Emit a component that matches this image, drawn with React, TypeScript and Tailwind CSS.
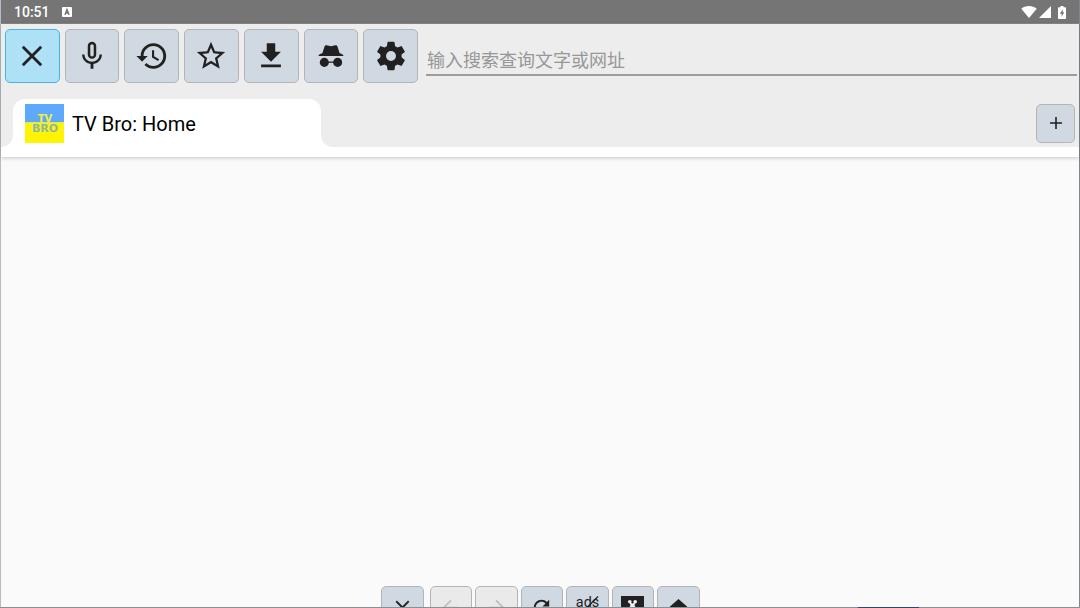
import React, { useState } from 'react';

type IconProps = { className?: string };

const CloseIcon: React.FC<IconProps> = ({ className }) => (
  <svg className={className} fill="none" stroke="currentColor" viewBox="0 0 24 24">
    <path strokeLinecap="square" strokeWidth={2} d="M6.200 6.200l11.600 11.600M17.800 6.200L6.200 17.800" />
  </svg>
);

const MicIcon: React.FC<IconProps> = ({ className }) => (
  <svg className={className} fill="currentColor" viewBox="0 0 24 24">
    <path d="M12 14c1.66 0 2.99-1.34 2.99-3L15 5c0-1.66-1.34-3-3-3S9 3.34 9 5v6c0 1.66 1.34 3 3 3zm-1.2-9.1c0-.66.54-1.2 1.2-1.2.66 0 1.2.54 1.2 1.2l-.01 6.2c0 .66-.53 1.2-1.19 1.2-.66 0-1.2-.54-1.2-1.2V4.9zm6.5 6.1c0 3-2.54 5.1-5.3 5.1S6.7 14 6.7 11H5c0 3.41 2.72 6.23 6 6.72V21h2v-3.28c3.28-.48 6-3.3 6-6.72h-1.7z" />
  </svg>
);

const HistoryIcon: React.FC<IconProps> = ({ className }) => (
  <svg className={className} fill="currentColor" viewBox="0 0 24 24">
    <path d="M13 3c-4.97 0-9 4.03-9 9H1l3.89 3.89.07.14L9 12H6c0-3.87 3.13-7 7-7s7 3.13 7 7-3.13 7-7 7c-1.93 0-3.68-.79-4.94-2.06l-1.42 1.42C8.27 19.99 10.51 21 13 21c4.97 0 9-4.03 9-9s-4.03-9-9-9zm-1 5v5l4.28 2.54.72-1.21-3.5-2.08V8H12z" />
  </svg>
);

const StarIcon: React.FC<IconProps> = ({ className }) => (
  <svg className={className} fill="currentColor" viewBox="0 0 24 24">
    <path d="M22 9.24l-7.19-.62L12 2 9.19 8.63 2 9.24l5.46 4.73L5.82 21 12 17.27 18.18 21l-1.63-7.03L22 9.24zM12 15.4l-3.76 2.27 1-4.28-3.32-2.88 4.38-.38L12 6.1l1.71 4.04 4.38.38-3.32 2.88 1 4.28L12 15.4z" />
  </svg>
);

const DownloadIcon: React.FC<IconProps> = ({ className }) => (
  <svg className={className} fill="currentColor" viewBox="0 0 24 24">
    <path d="M19 9h-4V3H9v6H5l7 7 7-7zM5 18v2h14v-2H5z" />
  </svg>
);

const IncognitoIcon: React.FC<IconProps> = ({ className }) => (
  <svg className={className} fill="currentColor" viewBox="0 0 24 24">
    <path d="M5.900 10L7.500 5.200c.2-.7.800-1 1.500-.8L12 5.200l3-.8c.7-.2 1.300.1 1.500.8L18.100 10c1.100.3 2 .7 2.600 1.400v.6H3.300v-.6c.6-.7 1.500-1.100 2.600-1.400z" />
    <circle cx="7.300" cy="16.500" r="3.200" />
    <circle cx="16.700" cy="16.500" r="3.200" />
    <path d="M9.500 15.900h5v.9h-5z" />
  </svg>
);

const SettingsIcon: React.FC<IconProps> = ({ className }) => (
  <svg className={className} fill="currentColor" viewBox="0 0 24 24">
    <path d="M12 15.5A3.5 3.5 0 0 1 8.500 12 3.500 3.500 0 0 1 12 8.500a3.500 3.500 0 0 1 3.500 3.500 3.500 3.500 0 0 1-3.500 3.500m7.430-2.530c.04-.32.07-.64.07-.97s-.03-.66-.07-1l2.110-1.630c.19-.15.24-.42.12-.64l-2-3.460c-.12-.22-.39-.31-.61-.22l-2.490 1c-.52-.39-1.060-.73-1.690-.98l-.37-2.650A.506.506 0 0 0 14 2h-4c-.25 0-.46.18-.5.42l-.37 2.650c-.63.25-1.170.59-1.690.98l-2.490-1c-.22-.09-.49 0-.61.22l-2 3.460c-.13.22-.07.49.12.64L4.570 11c-.04.34-.07.67-.07 1s.03.65.07.97l-2.110 1.660c-.19.15-.25.42-.12.64l2 3.460c.12.22.39.3.61.22l2.490-1.010c.52.4 1.060.74 1.690.99l.37 2.650c.04.24.25.42.5.42h4c.25 0 .46-.18.5-.42l.37-2.650c.63-.26 1.170-.59 1.690-.99l2.490 1.010c.22.08.49 0 .61-.22l2-3.460c.12-.22.07-.49-.12-.64z" />
  </svg>
);

const BackIcon: React.FC<IconProps> = ({ className }) => (
  <svg className={className} fill="none" stroke="currentColor" viewBox="0 0 24 24">
    <path strokeWidth={1.8} d="M20 12H5M12.500 4.500L5 12l7.500 7.500" />
  </svg>
);

const ForwardIcon: React.FC<IconProps> = ({ className }) => (
  <svg className={className} fill="none" stroke="currentColor" viewBox="0 0 24 24">
    <path strokeWidth={1.8} d="M4 12h15M11.500 4.500L19 12l-7.500 7.500" />
  </svg>
);

const RefreshIcon: React.FC<IconProps> = ({ className }) => (
  <svg className={className} fill="currentColor" viewBox="0 0 24 24">
    <path d="M17.65 6.35C16.200 4.900 14.210 4 12 4c-4.420 0-7.990 3.580-7.990 8s3.570 8 7.990 8c3.730 0 6.840-2.550 7.730-6h-2.080c-.82 2.330-3.040 4-5.650 4-3.310 0-6-2.690-6-6s2.690-6 6-6c1.660 0 3.140.69 4.220 1.780L13 11h7V4l-2.350 2.350z" />
  </svg>
);

const AdsIcon: React.FC<IconProps> = ({ className }) => (
  <svg className={className} viewBox="0 0 24 24">
    <text x="12" y="11.500" textAnchor="middle" fontSize="15" fill="currentColor" className="font-['Roboto',sans-serif]">
      ads
    </text>
    <path stroke="currentColor" strokeWidth={1.3} d="M12 11.500L23 .5" />
  </svg>
);

const PopupBlockIcon: React.FC<IconProps> = ({ className }) => (
  <svg className={className} viewBox="0 0 24 24">
    <path fill="currentColor" d="M0 0h24v24H0z" />
    <g fill="#eef1f4">
      <circle cx="9.200" cy="6" r="1.900" />
      <circle cx="14.800" cy="6" r="1.900" />
      <circle cx="9.200" cy="13" r="1.900" />
      <circle cx="14.800" cy="13" r="1.900" />
      <path d="M9 6.500l3 1.200 3-1.200-.8 3.200.8 3.300H9l.8-3.300z" />
    </g>
  </svg>
);

const HomeIcon: React.FC<IconProps> = ({ className }) => (
  <svg className={className} fill="currentColor" viewBox="0 0 24 24">
    <path d="M10 20v-6h4v6h5v-8h3L12 3 2 12h3v8z" />
  </svg>
);

const SiteLogo: React.FC<IconProps> = ({ className }) => (
  <svg className={className} viewBox="0 0 39 39">
    <path fill="#5fa9fd" d="M0 0h39v18.500H0z" />
    <path fill="#fff500" d="M0 18.500h39V39H0z" />
    <g textAnchor="middle" className="font-['DejaVu_Sans',sans-serif] font-bold">
      <text x="20" y="18" fontSize="10" fill="#f2f03c">TV</text>
      <text x="20" y="28" fontSize="11" fill="#8db8a8">BRO</text>
    </g>
  </svg>
);

const toolbarItems = [
  { label: 'Close menu', Icon: CloseIcon },
  { label: 'Voice search', Icon: MicIcon },
  { label: 'History', Icon: HistoryIcon },
  { label: 'Favorites', Icon: StarIcon },
  { label: 'Downloads', Icon: DownloadIcon },
  { label: 'Incognito mode', Icon: IncognitoIcon },
  { label: 'Settings', Icon: SettingsIcon },
];

const navItems = [
  { label: 'Back', Icon: BackIcon, disabled: true },
  { label: 'Forward', Icon: ForwardIcon, disabled: true },
  { label: 'Refresh', Icon: RefreshIcon },
  { label: 'Block ads', Icon: AdsIcon },
  { label: 'Block popups', Icon: PopupBlockIcon },
  { label: 'Home', Icon: HomeIcon },
];

const StatusBar: React.FC = () => (
  <div className="flex h-6 items-center justify-between border-b border-[#8a8a8a] bg-[#757575] pl-[13px] pr-[13px] pt-px text-white">
    <div className="flex items-center gap-3">
      <span className="text-sm font-medium">10:51</span>
      <svg className="h-[10px] w-[10px]" viewBox="0 0 10 10">
        <rect width="10" height="10" rx="1" fill="currentColor" />
        <path fill="none" stroke="#757575" strokeWidth={1.5} d="M3 7.800L5 2.500l2 5.300M3.700 6h2.600" />
      </svg>
    </div>
    <div className="flex items-center">
      <svg className="h-3 w-4" fill="currentColor" viewBox="0 0 16 12">
        <path d="M8 12L.3 2.700C2.400 1 5 0 8 0s5.600 1 7.700 2.700z" />
      </svg>
      <svg className="ml-[2px] h-3 w-3" fill="currentColor" viewBox="0 0 12 12">
        <path d="M12 0v12H0z" />
      </svg>
      <svg className="ml-[7px] h-[13px] w-2" viewBox="0 0 8 13">
        <path fill="currentColor" d="M2.500 0h3v1.300H7.200q.8 0 .8.800v10.100q0 .8-.8.800H.8q-.8 0-.8-.8V2.100q0-.8.8-.8h1.700z" />
        <path fill="#757575" d="M4.700 3.300L1.900 7.800h1.700v3l2.700-4.500H4.700z" />
      </svg>
    </div>
  </div>
);

const App: React.FC = () => {
  const [url, setUrl] = useState('');

  return (
    <div className="flex h-screen flex-col overflow-hidden bg-[#fafafa] font-['Roboto','Noto_Sans_CJK_SC',sans-serif] text-[#212121]">
      <div className="flex min-h-0 flex-1 flex-col border-l border-r border-l-[#b4bcc6] border-r-[#7f8891]">
        <StatusBar />

        {/* Header: actions, address field and tabs */}
        <header className="bg-white shadow-[0_1px_4px_rgba(0,0,0,0.22)]">
          <div className="flex items-start gap-2 bg-[#ededed] pb-4 pl-1 pr-[2px] pt-[5px]">
            <div className="grid w-[413px] shrink-0 grid-cols-7 gap-[5px]">
              {toolbarItems.map(({ label, Icon }, i) => (
                <button
                  key={label}
                  aria-label={label}
                  className={`flex h-[54px] items-center justify-center rounded-[5px] border ${
                    i === 0 ? 'border-[#45b5dc] bg-[#aee1f5]' : 'border-[#b2b4b7] bg-[#d0d8e1]'
                  }`}
                >
                  <Icon className="h-[34px] w-[34px] shrink-0" />
                </button>
              ))}
            </div>
            <input
              type="text"
              aria-label="输入搜索查询文字或网址"
              placeholder="输入搜索查询文字或网址"
              value={url}
              onChange={(e) => setUrl(e.target.value)}
              className="mt-4 h-[31px] min-w-0 flex-1 border-b-2 border-[#9c9c9c] bg-transparent pl-px pt-[2px] text-lg outline-none placeholder:text-[#979797]"
            />
          </div>

          <div className="flex h-12 items-stretch">
            <div className="w-3 rounded-br-xl bg-[#ededed]" />
            <div className="w-[308px] bg-[#ededed]">
              <button className="flex h-full w-full items-center gap-2 rounded-t-xl bg-white pl-3 text-xl text-black">
                <SiteLogo className="h-[39px] w-[39px] shrink-0" />
                <span className="pt-[2px]">TV Bro: Home</span>
              </button>
            </div>
            <div className="flex flex-1 items-center justify-end rounded-bl-xl bg-[#ededed] pr-1">
              <button
                aria-label="New tab"
                className="flex h-[39px] w-[39px] items-center justify-center rounded-[5px] border border-[#b2b4b7] bg-[#d0d8e1]"
              >
                <svg className="h-3 w-3" stroke="currentColor" strokeWidth={1.600} viewBox="0 0 12 12">
                  <path d="M6 0v12M0 6h12" />
                </svg>
              </button>
            </div>
          </div>
          <div className="h-[10px]" />
        </header>

        <main className="flex-1" />

        {/* Navigation bar, only its upper half is in view */}
        <nav className="flex h-[21px] items-start justify-center gap-[6px] overflow-hidden">
          <button
            aria-label="Close tab"
            className="flex h-[43px] w-[43px] items-center justify-center rounded-[5px] border border-[#b2b4b7] bg-[#d0d8e1]"
          >
            <CloseIcon className="h-[23px] w-[23px]" />
          </button>
          <div className="grid w-[270px] grid-cols-6 gap-[3px]">
            {navItems.map(({ label, Icon, disabled }) => (
              <button
                key={label}
                aria-label={label}
                disabled={disabled}
                className={`flex h-[43px] items-center justify-center rounded-[5px] border border-[#b2b4b7] ${
                  disabled ? 'bg-[#eaeaea] text-[#bdbdbd]' : 'bg-[#d0d8e1]'
                }`}
              >
                <Icon className="h-[23px] w-[23px] shrink-0" />
              </button>
            ))}
          </div>
        </nav>
      </div>
      <div className="flex h-px shrink-0 justify-end bg-[#8b8e92] pr-[161px]">
        <div className="w-[61px] bg-[#33446f]" />
      </div>
    </div>
  );
};

export default App;
